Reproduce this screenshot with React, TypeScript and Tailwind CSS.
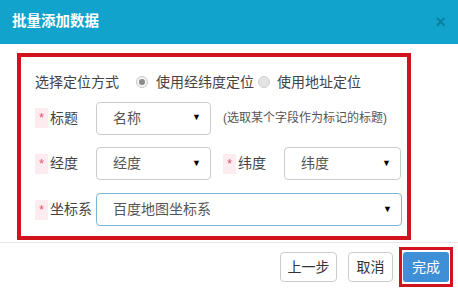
import React from "react";

const font = { fontFamily: '"Liberation Sans", "Noto Sans CJK SC", sans-serif' };

function Select({ value, w, focused }: { value: string; w: string; focused?: boolean }) {
  return (
    <div
      className={`${w} h-[33px] rounded-[4px] border ${focused ? "border-[#7fb7db]" : "border-[#cccccc]"} bg-white flex items-center justify-between pl-[16px] pr-[9px] text-[14px] text-[#555]`}
    >
      <span>{value}</span>
      <span className="text-[9px] text-black">▼</span>
    </div>
  );
}

function Label({ text, w }: { text: string; w: string }) {
  return (
    <div className={`${w} flex items-center text-[14px] text-[#444]`}>
      <span className="w-[13px] h-[20px] bg-[#fcecef] text-[#e0506a] text-[12px] flex items-center justify-center mr-[2px]">*</span>
      <span>{text}</span>
    </div>
  );
}

export default function App() {
  return (
    <div className="relative w-[458px] h-[292px] bg-white overflow-hidden" style={font}>
      <div className="h-[44px] bg-[#11a3cb] flex items-center justify-between pl-[12px] pr-[12px]">
        <span className="text-white text-[14.5px] font-bold">批量添加数据</span>
        <span className="text-[#0c7fa0] text-[18px] font-bold leading-none">×</span>
      </div>
      <div className="pt-[9px] pl-[17px]">
        <div className="w-[394px] h-[187px] border-4 border-[#d2121c] pt-[9px] pl-[14px]">
          <div className="h-[32px] flex items-center text-[14px] text-[#444]">
            <span>选择定位方式</span>
            <span className="ml-[17px] w-[12px] h-[12px] rounded-full border border-[#c8c8c8] bg-[#f4f4f4] flex items-center justify-center">
              <span className="w-[6px] h-[6px] rounded-full bg-[#8a8a8a]" />
            </span>
            <span className="ml-[8px]">使用经纬度定位</span>
            <span className="ml-[4px] w-[12px] h-[12px] rounded-full border border-[#cfcfcf] bg-[#e4e4e4]" />
            <span className="ml-[7px]">使用地址定位</span>
          </div>
          <div className="mt-[4px] h-[32px] flex items-center">
            <Label text="标题" w="w-[61px]" />
            <Select value="名称" w="w-[115px]" />
            <span className="ml-[12px] text-[12px] text-[#555]">(选取某个字段作为标记的标题)</span>
          </div>
          <div className="mt-[13px] h-[33px] flex items-center">
            <Label text="经度" w="w-[61px]" />
            <Select value="经度" w="w-[115px]" />
            <div className="ml-[12px]">
              <Label text="纬度" w="w-[61px]" />
            </div>
            <Select value="纬度" w="w-[117px]" />
          </div>
          <div className="mt-[13px] h-[33px] flex items-center">
            <Label text="坐标系" w="w-[61px]" />
            <Select value="百度地图坐标系" w="w-[306px]" focused />
          </div>
        </div>
      </div>
      <div className="mt-[2px] border-t border-[#e5e5e5] flex justify-end items-center pt-[4px] pr-[5px]">
        <div className="h-[30px] w-[57px] rounded-[4px] border border-[#cccccc] flex items-center justify-center text-[14px] text-[#333]">上一步</div>
        <div className="ml-[11px] h-[30px] w-[45px] rounded-[4px] border border-[#cccccc] flex items-center justify-center text-[14px] text-[#333]">取消</div>
        <div className="ml-[6px] h-[40px] w-[54px] border-[3px] border-[#d2121c] flex items-center justify-center">
          <div className="h-[30px] w-[46px] rounded-[3px] bg-[#3f8fd6] flex items-center justify-center text-[14px] text-white">完成</div>
        </div>
      </div>
    </div>
  );
}
